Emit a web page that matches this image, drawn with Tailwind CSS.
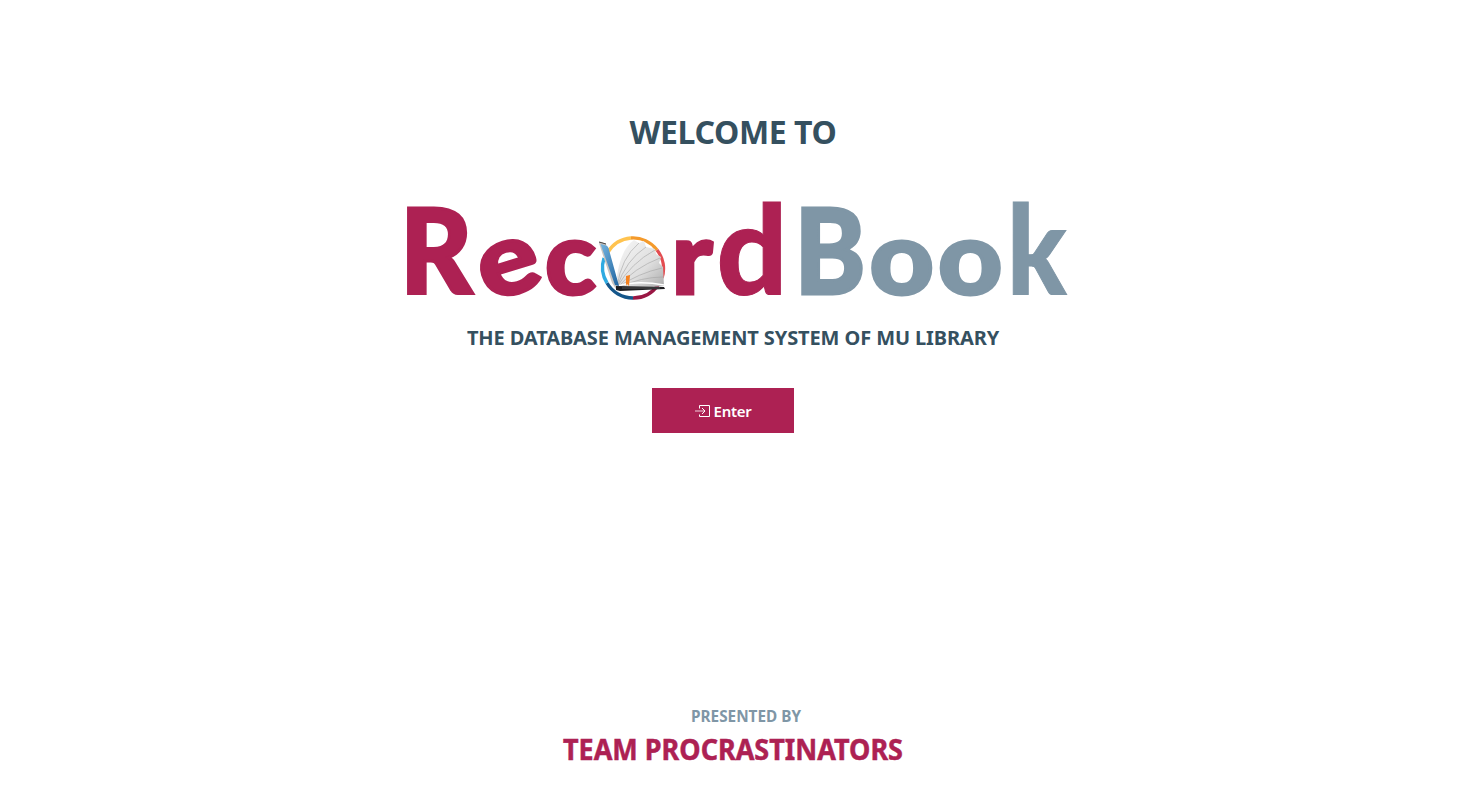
<!DOCTYPE html>
<html lang="en">
<head>
<meta charset="utf-8">
<title>RecordBook</title>
<script src="https://cdn.jsdelivr.net/npm/@tailwindcss/browser@4"></script>
</head>
<body class="bg-white font-['Noto_Sans','Open_Sans',sans-serif]">
<main class="flex h-[801px] w-[1466px] flex-col items-center overflow-hidden pt-[108px]">
  <h1 class="h-12 text-[32px] leading-[48px] font-bold whitespace-nowrap text-[#35505f] tracking-[-0.4px]">WELCOME TO</h1>
  <svg class="mt-[18px] h-[148px] w-[680px] shrink-0" viewBox="393 174 680 148" role="img" aria-label="RecordBook" font-family="Lato, sans-serif" font-weight="900" font-size="101" stroke-width="3">
    <defs>
      <linearGradient id="screen" x1="0" y1="0" x2="1" y2="1"><stop offset="0" stop-color="#74b4df"/><stop offset="1" stop-color="#1f639f"/></linearGradient>
      <linearGradient id="page" x1="0" y1="0" x2="1" y2="1"><stop offset="0" stop-color="#f8f8f8"/><stop offset=".6" stop-color="#dedede"/><stop offset="1" stop-color="#aaa"/></linearGradient>
    </defs>
    <g fill="#ad2153" stroke="#ad2153">
      <text x="400" y="294" font-size="118" textLength="72.500" lengthAdjust="spacingAndGlyphs">R</text>
      <text x="478.500" y="294" textLength="61" lengthAdjust="spacingAndGlyphs" transform="rotate(-17 509.500 268)">e</text>
      <text x="545" y="294" textLength="51" lengthAdjust="spacingAndGlyphs">c</text>
    </g>
    <g fill="none" stroke-width="3.4">
      <path d="M608 252A30 30 0 0 1 631 238" stroke="#ffc34f"/>
      <path d="M631 238A30 30 0 0 1 657 250" stroke="#f49a2b"/>
      <path d="M657 250A30 30 0 0 1 662 278" stroke="#e34d51"/>
      <path d="M658 285A30 30 0 0 1 633 298" stroke="#9a1744"/>
      <path d="M633 298A30 30 0 0 1 607 283" stroke="#14568a"/>
      <path d="M607 283A30 30 0 0 1 604 258" stroke="#2eaae1"/>
    </g>
    <path d="M616 287C617 268 622 248 634 240L639 243L644 241L646 247L655 249L656 254L661 257L659 263L663 267L664 286L640 288Z" fill="url(#page)"/>
    <g fill="none" stroke="#a5a5a5" stroke-width=".6">
      <path d="M617 287Q621 258 639 243M617 287Q626 260 646 247M617 287Q631 263 655 250M618 287Q634 268 660 258M618 287Q639 273 662 268M619 287Q642 277 663 277"/>
      <path d="M618 286Q637 280 664 285" stroke="#fff" stroke-width="1.5"/>
    </g>
    <path d="M626 276L630 275L629 286L627 284L626 286Z" fill="#f58220"/>
    <path d="M599 243Q599 241 602 242L606 244L619 287L616 289L612 283Z" fill="#c9c5c1"/>
    <path d="M600.5 244L606 245.500Q608 246 608.500 248L619 286L615 285Z" fill="url(#screen)"/>
    <path d="M599 242L606 244" stroke="#444" stroke-width="1"/>
    <path d="M616 286L664 287L665 289L620 291L616 290Z" fill="#1d1d20"/>
    <path d="M622 288L660 288" stroke="#777" stroke-width=".6"/>
    <g fill="#ad2153" stroke="#ad2153">
      <text x="671.5" y="293.5" textLength="41" lengthAdjust="spacingAndGlyphs">r</text>
      <text x="716.5" y="294.5" font-size="123" stroke-width="1" textLength="71" lengthAdjust="spacingAndGlyphs">d</text>
    </g>
    <g fill="#7f96a6" stroke="#7f96a6">
      <text x="794.5" y="293.5" font-size="118" textLength="71" lengthAdjust="spacingAndGlyphs">B</text>
      <text x="869.5" y="294" textLength="64.500" lengthAdjust="spacingAndGlyphs">o</text>
      <text x="938" y="294" textLength="64.500" lengthAdjust="spacingAndGlyphs">o</text>
      <text x="1007" y="294.5" font-size="123" stroke-width="1" textLength="59.500" lengthAdjust="spacingAndGlyphs">k</text>
    </g>
  </svg>
  <h2 class="mt-[1px] h-[30px] text-[20px] leading-[30px] font-bold whitespace-nowrap text-[#35505f] tracking-[-0.11px]">THE DATABASE MANAGEMENT SYSTEM OF MU LIBRARY</h2>
  <button class="mt-[35px] mr-5 flex h-[45px] w-[142px] shrink-0 items-center justify-center gap-1 bg-[#ad2153] pt-[2px] text-[15px] font-semibold text-white">
    <svg class="size-[15px]" viewBox="0 0 15 15" fill="none" stroke="currentColor"><path d="M4.5 4.500V1.500H14.500V12.500H4.500V10.500"/><path d="M0 7H10" stroke-opacity=".8"/><path d="M7 4L10 7L7 10"/></svg>
    <span class="tracking-[-0.3px]">Enter</span>
  </button>
  <footer class="mt-[261px] flex flex-col items-center whitespace-nowrap">
    <svg class="h-[96px] w-[400px] shrink-0" viewBox="533 694 400 96" font-family="Noto Sans, sans-serif" font-weight="700">
      <text x="691" y="721.5" font-size="16" fill="#7f96a6" textLength="110" lengthAdjust="spacingAndGlyphs">PRESENTED BY</text>
      <text x="563" y="759.5" font-size="29" fill="#ad2153" stroke="#ad2153" stroke-width=".5" textLength="340" lengthAdjust="spacingAndGlyphs">TEAM PROCRASTINATORS</text>
    </svg>
  </footer>
</main>
</body>
</html>
